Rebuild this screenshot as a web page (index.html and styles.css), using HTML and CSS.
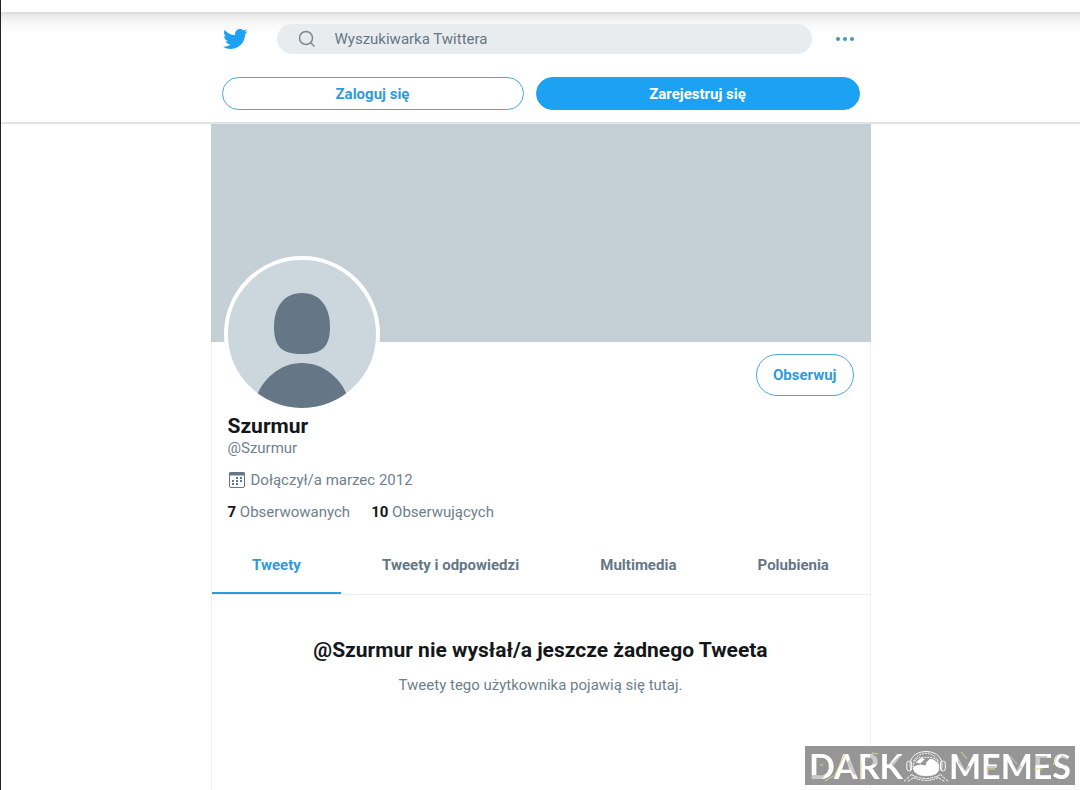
FILE: index.html
```html
<!DOCTYPE html>
<html lang="pl">
<head>
    <meta charset="UTF-8">
    <meta name="viewport" content="width=device-width, initial-scale=1.0">
    <title>Szurmur (@Szurmur) / Twitter</title>
    <link rel="stylesheet" href="styles.css">
</head>
<body>
    <div class="browser-edge"></div>
    <header class="topbar">
        <div class="topbar-inner">
            <div class="search-row">
                <a href="#" class="logo" aria-label="Twitter">
                    <svg viewBox="0 0 24 24"><path d="M23.643 4.937c-.835.37-1.732.62-2.675.733.962-.576 1.7-1.49 2.048-2.578-.9.534-1.897.922-2.958 1.13-.85-.904-2.06-1.47-3.4-1.47-2.572 0-4.658 2.086-4.658 4.66 0 .364.042.718.12 1.06-3.873-.195-7.304-2.05-9.602-4.868-.4.69-.63 1.49-.63 2.342 0 1.616.823 3.043 2.072 3.878-.764-.025-1.482-.234-2.11-.583v.06c0 2.257 1.605 4.14 3.737 4.568-.392.106-.803.162-1.227.162-.3 0-.593-.028-.877-.082.593 1.85 2.313 3.198 4.352 3.234-1.595 1.25-3.604 1.995-5.786 1.995-.376 0-.747-.022-1.112-.065 2.062 1.323 4.51 2.093 7.14 2.093 8.57 0 13.255-7.098 13.255-13.254 0-.2-.005-.402-.014-.602.91-.658 1.7-1.477 2.323-2.41z"/></svg>
                </a>
                <form class="search">
                    <label for="search" aria-label="Wyszukiwarka Twittera">
                        <svg viewBox="0 0 20 20"><circle cx="9" cy="9" r="6.5"/><path d="M14 14l3.500 3.500"/></svg>
                    </label>
                    <input type="text" id="search" placeholder="Wyszukiwarka Twittera">
                </form>
                <button class="more-btn" aria-label="Więcej">
                    <svg viewBox="0 0 20 6"><circle cx="3" cy="3" r="2"/><circle cx="10" cy="3" r="2"/><circle cx="17" cy="3" r="2"/></svg>
                </button>
            </div>
            <div class="auth-row">
                <button class="btn login">Zaloguj się</button>
                <button class="btn signup">Zarejestruj się</button>
            </div>
        </div>
    </header>

    <main class="column">
        <div class="banner"></div>
        <section class="profile">
            <div class="profile-top">
                <div class="avatar">
                    <svg viewBox="0 0 148 148">
                        <path d="M74 33c19 0 28 15 28 34 0 21-9 27-28 27s-28-6-28-27c0-19 9-34 28-34z"/>
                        <path d="M27 140C34 119 52 103 74 103s40 16 47 37v8H27z"/>
                    </svg>
                </div>
                <button class="btn follow">Obserwuj</button>
            </div>
            <h1 class="name">Szurmur</h1>
            <p class="handle">@Szurmur</p>
            <p class="joined">
                <svg viewBox="0 0 18 18">
                    <rect x="1.500" y="1.500" width="15" height="15" rx="1.500"/>
                    <path class="bar" d="M1 3h16"/>
                    <path class="dots" d="M8 7h2M12 7h2M4 10h2M8 10h2M12 10h2M4 13h2M8 13h2"/>
                </svg>
                Dołączył/a marzec 2012
            </p>
            <p class="stats">
                <a href="#"><b>7</b> Obserwowanych</a>
                <a href="#"><b>10</b> Obserwujących</a>
            </p>
        </section>
        <nav class="tabs">
            <a href="#" class="tab active">Tweety</a>
            <a href="#" class="tab">Tweety i odpowiedzi</a>
            <a href="#" class="tab">Multimedia</a>
            <a href="#" class="tab">Polubienia</a>
        </nav>
        <section class="empty">
            <h2>@Szurmur nie wysłał/a jeszcze żadnego Tweeta</h2>
            <p>Tweety tego użytkownika pojawią się tutaj.</p>
        </section>
    </main>

    <div class="watermark">
        <span>DARK</span>
        <svg class="helmet" viewBox="0 0 48 34">
            <path d="M1 33l9-8M5 33l8-5M47 33l-9-8M43 33l-8-5M9 26q15 8 30 0M11 29q13 6 26 0" stroke-dasharray="3 1"/>
            <path d="M8 21C5 9 13 2 24 2s19 7 16 19"/>
            <path d="M11 12C14 6 19 4 24 4s10 2 13 8M13 24C9 19 10 10 18 8h12c8 2 9 11 5 16" stroke-dasharray="2 1"/>
            <rect x="4" y="12" width="5" height="10" rx="2"/>
            <rect x="39" y="12" width="5" height="10" rx="2"/>
            <path class="visor" d="M11 19c2-3 5-2 7-3l6 1 1-4 3-3c5 0 9 4 9 9 0 6-5 8-13 8s-12-3-13-8z"/>
            <path class="visor" d="M14 13l5-4 3 1-4 4z"/>
        </svg>
        <span>MEMES</span>
        <!-- glitch marks over the letters -->
        <svg class="glitch" viewBox="0 0 270 39">
            <path class="shade" d="M6 29h14l-3 4H6zM42 17l5-7 7 18-5 1zM65 9h12l-6 9-6 1zM94 10l8 0-12 12-4-4zM153 9l12 12-4 5-8-9zM182 20h12v9h-12zM210 12l7 9-5 5-5-9zM229 10h13v9h-13zM257 9l9 5-7 6-5-6z"/>
            <path class="spark" d="M20 35l8-5M29 31L40 8M15 19h3M56 16v18M67 7l6 1M156 6l6 7M181 23h9M205 10l7 8M229 23h9M252 10l-4 9"/>
        </svg>
    </div>
</body>
</html>
```
FILE: styles.css
```css
* {
    box-sizing: border-box;
}

body {
    margin: 0;
    min-height: 100vh;
    display: flex;
    flex-direction: column;
    border-left: 1px solid #222;
    background: #fff;
    color: #14171a;
    font-family: Roboto, Arial, sans-serif;
    font-size: 15px;
    line-height: 20px;
}

h1, h2, p {
    margin: 0;
}

a {
    color: inherit;
    text-decoration: none;
}

button {
    font: inherit;
    cursor: pointer;
}

/* bottom edge of the browser toolbar */
.browser-edge {
    height: 12px;
    background: #fff;
}

.topbar {
    border-bottom: 2px solid #e1e4e6;
    background: linear-gradient(#dadada, #ececec 4px, #f8f8f8 12px, #fff 22px);
}

.topbar-inner {
    max-width: 662px;
    margin: 0 auto;
    padding: 12px;
}

.search-row {
    display: flex;
    align-items: center;
    height: 30px;
}

.logo {
    display: flex;
    margin-right: 29px;
}

.logo svg {
    width: 26px;
    height: 26px;
    fill: #1da1f2;
}

.search {
    flex: 1;
    display: flex;
    align-items: center;
    height: 30px;
    padding-left: 20px;
    border-radius: 15px;
    background: #e8ecef;
}

.search label {
    display: flex;
}

.search svg {
    width: 20px;
    height: 20px;
    fill: none;
    stroke: #7b8a97;
    stroke-width: 1.5;
}

.search input {
    flex: 1;
    padding: 0 18px;
    border: none;
    outline: none;
    background: none;
    font: inherit;
}

.search input::placeholder {
    color: #657786;
}

.more-btn {
    display: flex;
    margin: 0 5px 0 23px;
    padding: 0;
    border: none;
    background: none;
}

.more-btn svg {
    width: 20px;
    height: 6px;
    fill: #3f94c8;
}

.auth-row {
    display: flex;
    gap: 12px;
    margin-top: 23px;
}

.btn {
    height: 33px;
    border: 1px solid #4fa5d8;
    border-radius: 21px;
    background: #fff;
    color: #2f9bdb;
    font-weight: bold;
}

.login {
    flex: 301;
}

.signup {
    flex: 324;
    border-color: #1da1f2;
    background: #1da1f2;
    color: #fff;
}

.column {
    flex: 1;
    width: 100%;
    max-width: 660px;
    margin: 0 auto;
    border: 1px solid #f0f2f4;
    border-width: 0 1px;
}

.banner {
    height: 218px;
    margin: 0 -1px;
    background: #c4cfd6;
}

.profile {
    padding: 12px 16px 0;
}

.profile-top {
    display: flex;
    justify-content: space-between;
    align-items: flex-start;
    height: 60px;
}

/* avatar overlaps the banner */
.avatar {
    margin: -98px 0 0 -4px;
    width: 156px;
    height: 156px;
    border: 4px solid #fff;
    border-radius: 50%;
    overflow: hidden;
    background: #ccd6dd;
}

.avatar svg {
    display: block;
    fill: #657786;
}

.follow {
    height: 42px;
    padding: 0 16px;
}

.name {
    font-size: 21px;
    line-height: 24px;
}

.handle,
.joined,
.stats {
    color: #6f7f8c;
}

.joined {
    display: flex;
    align-items: center;
    gap: 5px;
    margin-top: 12px;
}

.joined svg {
    width: 18px;
    height: 18px;
    fill: none;
    stroke: #657786;
}

.joined .bar {
    stroke-width: 3;
}

.joined .dots {
    stroke-width: 2;
}

.stats {
    display: flex;
    gap: 21px;
    margin-top: 12px;
}

.stats b {
    color: #14171a;
}

.tabs {
    display: flex;
    margin-top: 16px;
    border-bottom: 1px solid #e9edf0;
}

.tab {
    flex: 1 1 auto;
    padding: 17px 0;
    border-bottom: 2px solid transparent;
    color: #657786;
    font-weight: bold;
    text-align: center;
}

.tab.active {
    border-color: #2f9bdb;
    color: #2f9bdb;
}

.empty {
    padding: 42px 20px;
    text-align: center;
}

.empty h2 {
    font-size: 21px;
    line-height: 26px;
}

.empty p {
    margin-top: 12px;
    color: #6f7f8c;
}

.watermark {
    position: fixed;
    right: 5px;
    bottom: 5px;
    display: flex;
    align-items: center;
    justify-content: space-between;
    width: 270px;
    height: 39px;
    padding: 0 4px;
    background: #969696;
    color: #fff;
    font-family: Lato, sans-serif;
    font-size: 34px;
    font-weight: bold;
}

.helmet {
    width: 48px;
    height: 34px;
    fill: none;
    stroke: #fff;
}

.helmet .visor {
    fill: #fff;
}

.glitch {
    position: absolute;
    inset: 0;
    fill: none;
}

.glitch .shade {
    fill: #969696;
    fill-opacity: 0.5;
}

.glitch .spark {
    stroke: #d9d68c;
}
```
